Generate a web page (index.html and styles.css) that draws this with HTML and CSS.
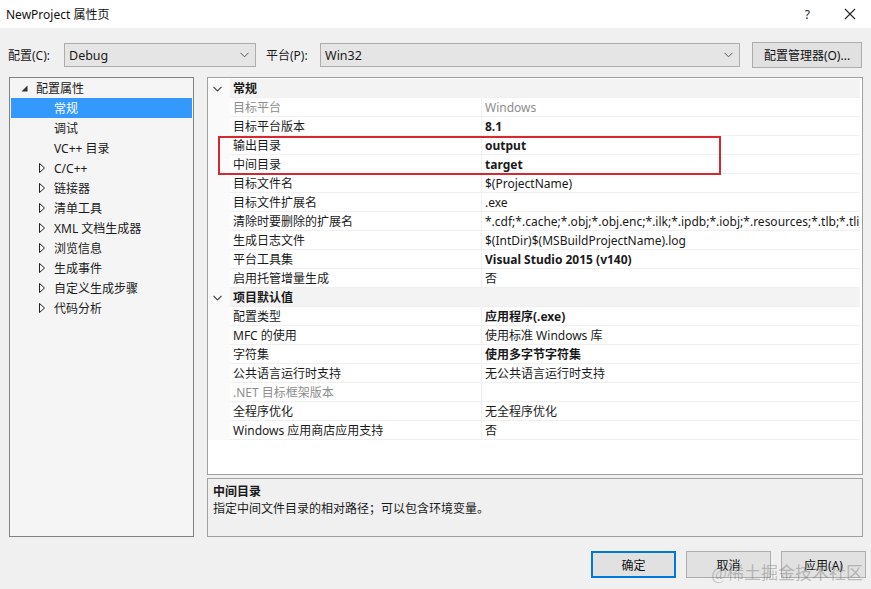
FILE: index.html
```html
<!DOCTYPE html>
<html lang="zh">
<head>
    <meta charset="UTF-8">
    <title>NewProject 属性页</title>
    <link rel="stylesheet" href="styles.css">
</head>
<body>
    <div class="titlebar">
        <span class="title">NewProject 属性页</span>
        <span class="help">?</span>
        <svg class="close" width="12" height="12" viewBox="0 0 12 12">
            <path d="M1 1L11 11M11 1L1 11" stroke="#222" stroke-width="1.1" fill="none"/>
        </svg>
    </div>

    <div class="toolbar">
        <span class="label label-config">配置(C):</span>
        <div class="combo combo-config">
            <span>Debug</span>
            <svg width="9" height="6" viewBox="0 0 9 6"><path d="M0.5 0.8L4.5 4.8L8.5 0.8" stroke="#555" fill="none"/></svg>
        </div>
        <span class="label label-platform">平台(P):</span>
        <div class="combo combo-platform">
            <span>Win32</span>
            <svg width="9" height="6" viewBox="0 0 9 6"><path d="M0.5 0.8L4.5 4.8L8.5 0.8" stroke="#555" fill="none"/></svg>
        </div>
        <button class="btn btn-manager">配置管理器(O)...</button>
    </div>

    <div class="main">
        <div class="tree">
            <div class="node root">
                <svg class="exp" width="7" height="7" viewBox="0 0 7 7"><path d="M6.5 0.5V6.5H0.5Z" fill="#333"/></svg>
                <span>配置属性</span>
            </div>
            <div class="node child selected"><span>常规</span></div>
            <div class="node child"><span>调试</span></div>
            <div class="node child"><span>VC++ 目录</span></div>
            <div class="node child"><svg class="col" width="6" height="10" viewBox="0 0 6 10"><path d="M0.5 0.5L5.5 5L0.5 9.5Z" stroke="#222" fill="none"/></svg><span>C/C++</span></div>
            <div class="node child"><svg class="col" width="6" height="10" viewBox="0 0 6 10"><path d="M0.5 0.5L5.5 5L0.5 9.5Z" stroke="#222" fill="none"/></svg><span>链接器</span></div>
            <div class="node child"><svg class="col" width="6" height="10" viewBox="0 0 6 10"><path d="M0.5 0.5L5.5 5L0.5 9.5Z" stroke="#222" fill="none"/></svg><span>清单工具</span></div>
            <div class="node child"><svg class="col" width="6" height="10" viewBox="0 0 6 10"><path d="M0.5 0.5L5.5 5L0.5 9.5Z" stroke="#222" fill="none"/></svg><span>XML 文档生成器</span></div>
            <div class="node child"><svg class="col" width="6" height="10" viewBox="0 0 6 10"><path d="M0.5 0.5L5.5 5L0.5 9.5Z" stroke="#222" fill="none"/></svg><span>浏览信息</span></div>
            <div class="node child"><svg class="col" width="6" height="10" viewBox="0 0 6 10"><path d="M0.5 0.5L5.5 5L0.5 9.5Z" stroke="#222" fill="none"/></svg><span>生成事件</span></div>
            <div class="node child"><svg class="col" width="6" height="10" viewBox="0 0 6 10"><path d="M0.5 0.5L5.5 5L0.5 9.5Z" stroke="#222" fill="none"/></svg><span>自定义生成步骤</span></div>
            <div class="node child"><svg class="col" width="6" height="10" viewBox="0 0 6 10"><path d="M0.5 0.5L5.5 5L0.5 9.5Z" stroke="#222" fill="none"/></svg><span>代码分析</span></div>
        </div>

        <div class="right">
            <div class="grid">
                <div class="row category">
                    <div class="gutter"><svg width="9" height="6" viewBox="0 0 9 6"><path d="M0.5 0.8L4.5 4.8L8.5 0.8" stroke="#444" stroke-width="1.2" fill="none"/></svg></div>
                    <div class="name">常规</div>
                </div>
                <div class="row"><div class="gutter"></div><div class="name dim">目标平台</div><div class="value dim">Windows</div></div>
                <div class="row"><div class="gutter"></div><div class="name">目标平台版本</div><div class="value bold">8.1</div></div>
                <div class="row"><div class="gutter"></div><div class="name">输出目录</div><div class="value bold">output</div></div>
                <div class="row"><div class="gutter"></div><div class="name">中间目录</div><div class="value bold">target</div></div>
                <div class="row"><div class="gutter"></div><div class="name">目标文件名</div><div class="value">$(ProjectName)</div></div>
                <div class="row"><div class="gutter"></div><div class="name">目标文件扩展名</div><div class="value">.exe</div></div>
                <div class="row"><div class="gutter"></div><div class="name">清除时要删除的扩展名</div><div class="value">*.cdf;*.cache;*.obj;*.obj.enc;*.ilk;*.ipdb;*.iobj;*.resources;*.tlb;*.tli;*.tlh;*.tmp;*.rsp</div></div>
                <div class="row"><div class="gutter"></div><div class="name">生成日志文件</div><div class="value">$(IntDir)$(MSBuildProjectName).log</div></div>
                <div class="row"><div class="gutter"></div><div class="name">平台工具集</div><div class="value bold">Visual Studio 2015 (v140)</div></div>
                <div class="row"><div class="gutter"></div><div class="name">启用托管增量生成</div><div class="value">否</div></div>
                <div class="row category">
                    <div class="gutter"><svg width="9" height="6" viewBox="0 0 9 6"><path d="M0.5 0.8L4.5 4.8L8.5 0.8" stroke="#444" stroke-width="1.2" fill="none"/></svg></div>
                    <div class="name">项目默认值</div>
                </div>
                <div class="row"><div class="gutter"></div><div class="name">配置类型</div><div class="value bold">应用程序(.exe)</div></div>
                <div class="row"><div class="gutter"></div><div class="name">MFC 的使用</div><div class="value">使用标准 Windows 库</div></div>
                <div class="row"><div class="gutter"></div><div class="name">字符集</div><div class="value bold">使用多字节字符集</div></div>
                <div class="row"><div class="gutter"></div><div class="name">公共语言运行时支持</div><div class="value">无公共语言运行时支持</div></div>
                <div class="row"><div class="gutter"></div><div class="name dim">.NET 目标框架版本</div><div class="value"></div></div>
                <div class="row"><div class="gutter"></div><div class="name">全程序优化</div><div class="value">无全程序优化</div></div>
                <div class="row"><div class="gutter"></div><div class="name">Windows 应用商店应用支持</div><div class="value">否</div></div>

                <div class="highlight"></div>
            </div>

            <div class="desc">
                <div class="desc-title">中间目录</div>
                <div class="desc-text">指定中间文件目录的相对路径；可以包含环境变量。</div>
            </div>
        </div>
    </div>

    <div class="footer">
        <button class="btn btn-ok">确定</button>
        <button class="btn">取消</button>
        <button class="btn">应用(A)</button>
        <span class="watermark">@稀土掘金技术社区</span>
    </div>
</body>
</html>
```

FILE: styles.css
```css
body {
    margin: 0;
    width: 871px;
    height: 589px;
    background-color: #f0f0f0;
    font-family: "Noto Sans", "Noto Sans CJK SC", sans-serif;
    font-size: 12px;
    color: #1a1a1a;
    overflow: hidden;
    position: relative;
}

.titlebar {
    height: 28px;
    background-color: white;
    display: flex;
    align-items: center;
    padding-left: 6px;
}

.titlebar .title {
    font-size: 12px;
    color: #111;
}

.titlebar .help {
    margin-left: auto;
    margin-right: 34px;
    font-size: 12px;
    color: #222;
}

.titlebar .close {
    margin-right: 15px;
}

.toolbar {
    display: flex;
    align-items: center;
    margin-top: 14px;
    height: 26px;
}

.label-config {
    margin-left: 8px;
    width: 56px;
}

.label-platform {
    margin-left: 10px;
    width: 54px;
}

.combo {
    height: 24px;
    box-sizing: border-box;
    border: 1px solid #adadad;
    background-color: #e5e5e5;
    display: flex;
    align-items: center;
    justify-content: space-between;
    padding: 0 6px 0 4px;
    font-size: 12.5px;
}

.combo-config {
    width: 192px;
}

.combo-platform {
    width: 420px;
}

.btn {
    font-family: "Noto Sans", "Noto Sans CJK SC", sans-serif;
    font-size: 12px;
    color: #111;
    background-color: #e1e1e1;
    border: 1px solid #adadad;
    padding: 0;
    box-sizing: border-box;
}

.btn-manager {
    margin-left: 12px;
    width: 110px;
    height: 26px;
}

.main {
    display: flex;
    margin-top: 9px;
}

.tree {
    margin-left: 9px;
    width: 185px;
    height: 460px;
    box-sizing: border-box;
    border: 1px solid #828282;
    background-color: #f5f5f5;
}

.tree .node {
    height: 20px;
    display: flex;
    align-items: center;
    position: relative;
    margin: 0 1px;
}

.tree .root {
    padding-left: 10px;
}

.tree .root .exp {
    margin-right: 8px;
}

.tree .child {
    padding-left: 43px;
}

.tree .child .col {
    position: absolute;
    left: 28px;
    top: 5px;
}

.tree .selected {
    background-color: #3399ff;
    color: white;
}

.right {
    margin-left: 13px;
    width: 656px;
    display: flex;
    flex-direction: column;
    gap: 3px;
}

.grid {
    height: 398px;
    box-sizing: border-box;
    border: 1px solid #a0a0a0;
    background-color: white;
    position: relative;
    overflow: hidden;
    padding-top: 1px;
    padding-right: 2px;
}

.grid .row {
    height: 19px;
    display: flex;
    align-items: center;
}

.grid .gutter {
    width: 22px;
    height: 19px;
    flex-shrink: 0;
    display: flex;
    align-items: center;
    padding-left: 5px;
    box-sizing: border-box;
    background-color: #fafafa;
}

.grid .name {
    width: 252px;
    flex-shrink: 0;
    height: 19px;
    line-height: 19px;
    padding-left: 3px;
    box-sizing: border-box;
    border-right: 1px solid #f0f0f0;
    border-bottom: 1px solid #f0f0f0;
    white-space: nowrap;
}

.grid .value {
    flex: 1;
    height: 19px;
    line-height: 19px;
    padding-left: 3px;
    box-sizing: border-box;
    border-bottom: 1px solid #f0f0f0;
    white-space: nowrap;
    overflow: hidden;
}

.grid .category .name {
    flex: 1;
    font-weight: bold;
    background-color: #f3f3f3;
    border-right: none;
}

.grid .dim {
    color: #8d8d8d;
}

.grid .bold {
    font-weight: bold;
}

.grid .highlight {
    position: absolute;
    left: 10px;
    top: 58px;
    width: 503px;
    height: 39px;
    box-sizing: border-box;
    border: 2px solid #d7282f;
}

.desc {
    height: 59px;
    box-sizing: border-box;
    border: 1px solid #a0a0a0;
    padding: 4px 5px;
    line-height: 17px;
}

.desc-title {
    font-weight: bold;
}

.footer {
    display: flex;
    justify-content: flex-end;
    gap: 10px;
    margin-top: 14px;
    margin-right: 5px;
}

.footer .btn {
    width: 85px;
    height: 27px;
}

.footer .btn-ok {
    border: 2px solid #0078d7;
}

.watermark {
    position: absolute;
    right: 8px;
    bottom: 5px;
    font-family: "Liberation Serif", "Noto Sans CJK SC", serif;
    font-size: 17px;
    color: rgba(120, 120, 120, 0.45);
}
```
